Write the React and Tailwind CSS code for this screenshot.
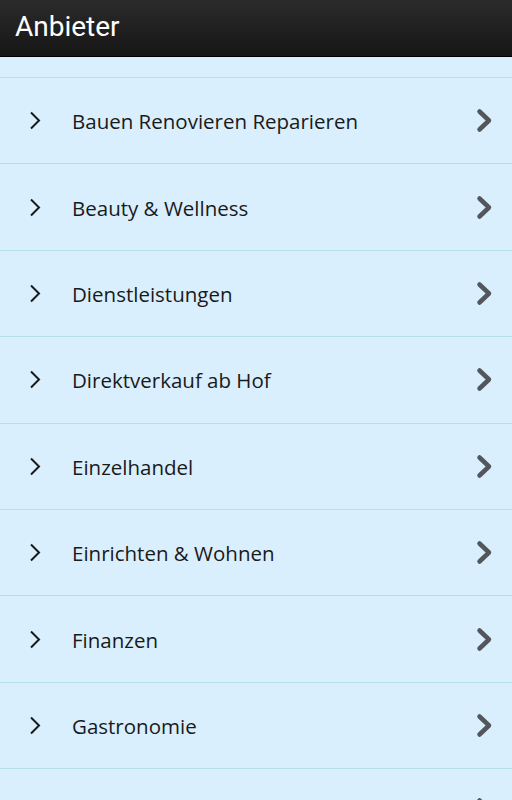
const items = [
  'Bauen Renovieren Reparieren',
  'Beauty & Wellness',
  'Dienstleistungen',
  'Direktverkauf ab Hof',
  'Einzelhandel',
  'Einrichten & Wohnen',
  'Finanzen',
  'Gastronomie',
]

function ThinChevron() {
  return (
    <svg width="12" height="19" viewBox="0 0 12 19" className="text-[#1a1a1a]">
      <path d="M2 1.5 L10 9.5 L2 17.5" fill="none" stroke="currentColor" strokeWidth="2" />
    </svg>
  )
}

function BoldChevron() {
  return (
    <svg width="17" height="25" viewBox="0 0 17 25" className="text-[#53565a]">
      <path d="M3.5 3.5 L13 12.5 L3.5 21.5" fill="none" stroke="currentColor" strokeWidth="4.5" strokeLinecap="round" strokeLinejoin="round" />
    </svg>
  )
}

export default function App() {
  return (
    <div className="w-[512px] h-[800px] overflow-hidden bg-[#d9effd] font-['Open_Sans',sans-serif]">
      {/* Action bar */}
      <div className="h-[57px] flex items-center px-[15px] pb-[2px] bg-gradient-to-b from-[#2b2b2b] to-[#161616] border-b border-black">
        <span className="text-white text-[28px] font-['Roboto',sans-serif] leading-none">Anbieter</span>
      </div>

      <div className="h-[21px] border-b border-[#b5dfeb]" />

      {items.map(name => (
        <div
          key={name}
          className="h-[86.4px] flex items-center border-b border-[#b5dfeb] pl-[29px] pr-[19px]"
        >
          <ThinChevron />
          <span className="ml-[31px] flex-1 text-[20.5px] text-[#1a1a1a] pt-[2px]">{name}</span>
          <BoldChevron />
        </div>
      ))}

      {/* next row, scrolled just below the fold */}
      <div className="h-[86.4px] flex items-start justify-end pr-[19px] pt-[28px]">
        <BoldChevron />
      </div>
    </div>
  )
}
